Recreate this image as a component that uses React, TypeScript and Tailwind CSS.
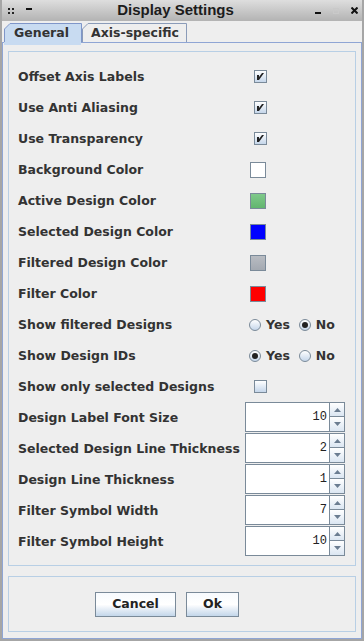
import React from "react";

const SANS = { fontFamily: '"DejaVu Sans", "Liberation Sans", sans-serif' };
const TITLE = { fontFamily: '"Liberation Sans", "DejaVu Sans", sans-serif' };
const MONO = { fontFamily: '"Liberation Mono", "DejaVu Sans Mono", monospace' };

type Row =
  | { label: string; kind: "check"; checked: boolean }
  | { label: string; kind: "color"; color: string }
  | { label: string; kind: "radio"; yes: boolean }
  | { label: string; kind: "spin"; value: string };

const rows: Row[] = [
  { label: "Offset Axis Labels", kind: "check", checked: true },
  { label: "Use Anti Aliasing", kind: "check", checked: true },
  { label: "Use Transparency", kind: "check", checked: true },
  { label: "Background Color", kind: "color", color: "#ffffff" },
  { label: "Active Design Color", kind: "color", color: "green" },
  { label: "Selected Design Color", kind: "color", color: "#0000ff" },
  { label: "Filtered Design Color", kind: "color", color: "gray" },
  { label: "Filter Color", kind: "color", color: "#ff0000" },
  { label: "Show filtered Designs", kind: "radio", yes: false },
  { label: "Show Design IDs", kind: "radio", yes: true },
  { label: "Show only selected Designs", kind: "check", checked: false },
  { label: "Design Label Font Size", kind: "spin", value: "10" },
  { label: "Selected Design Line Thickness", kind: "spin", value: "2" },
  { label: "Design Line Thickness", kind: "spin", value: "1" },
  { label: "Filter Symbol Width", kind: "spin", value: "7" },
  { label: "Filter Symbol Height", kind: "spin", value: "10" },
];

function CheckBox({ checked }: { checked: boolean }) {
  return (
    <div className="ml-[9px] w-[13px] h-[13px] border border-[#7a8a99] bg-gradient-to-b from-[#ffffff] to-[#c5d6ea] flex items-center justify-center">
      {checked && (
        <svg width="11" height="11" viewBox="0 0 11 11">
          <path d="M2 4 h2 v2 l3-4 h2 l-5 7 h-2z" fill="#222" />
        </svg>
      )}
    </div>
  );
}

function Swatch({ color }: { color: string }) {
  let cls = "";
  if (color === "green") cls = "bg-gradient-to-b from-[#7fc98a] to-[#62b66f]";
  else if (color === "gray") cls = "bg-gradient-to-b from-[#b8bcc2] to-[#a3a9b1]";
  else if (color === "#ffffff") cls = "bg-white";
  else if (color === "#0000ff") cls = "bg-[#0000ff]";
  else cls = "bg-[#ff0000]";
  return <div className={`ml-[5px] w-[16px] h-[16px] border border-[#7a8a99] ${cls}`} />;
}

function Radio({ on }: { on: boolean }) {
  return (
    <div className="w-[12px] h-[12px] rounded-full border border-[#7a8a99] bg-gradient-to-b from-[#ffffff] to-[#c5d6ea] flex items-center justify-center">
      {on && <div className="w-[6px] h-[6px] rounded-full bg-[#222]" />}
    </div>
  );
}

function RadioPair({ yes }: { yes: boolean }) {
  return (
    <div className="ml-[4px] flex items-center text-[12.5px] font-bold text-[#333]" style={SANS}>
      <Radio on={yes} />
      <span className="ml-[5px] pt-[1px]">Yes</span>
      <div className="ml-[9px]">
        <Radio on={!yes} />
      </div>
      <span className="ml-[5px] pt-[1px]">No</span>
    </div>
  );
}

function Arrow({ up }: { up: boolean }) {
  return (
    <svg width="7" height="4" viewBox="0 0 7 4">
      {up ? <path d="M0 4 L3.5 0 L7 4z" fill="#6b7d91" /> : <path d="M0 0 L3.5 4 L7 0z" fill="#6b7d91" />}
    </svg>
  );
}

function Spinner({ value }: { value: string }) {
  return (
    <div className="self-start flex h-[30px]">
      <div
        className="w-[84px] h-full border-l border-t border-b border-[#7a8a99] bg-white flex items-center justify-end pr-[2px] text-[12px] text-[#222]"
        style={MONO}
      >
        {value}
      </div>
      <div className="w-[16px] h-full flex flex-col">
        <div className="h-[15px] border border-[#7a8a99] bg-gradient-to-b from-[#ffffff] to-[#dbe6f2] flex items-center justify-center">
          <Arrow up />
        </div>
        <div className="h-[15px] border border-t-0 border-[#7a8a99] bg-gradient-to-b from-[#ffffff] to-[#dbe6f2] flex items-center justify-center">
          <Arrow up={false} />
        </div>
      </div>
    </div>
  );
}

function Tab({ label, selected, width }: { label: string; selected: boolean; width: number }) {
  const fill = selected ? "#c8dbf1" : "#eeeeee";
  const stroke = selected ? "#7f96c9" : "#8a9bb8";
  return (
    <div
      className={`relative h-full flex items-center ${selected ? "pl-[10px]" : "pl-[9px]"}`}
      style={{ width }}
    >
      <svg className="absolute inset-0" width={width} height="19" viewBox={`0 0 ${width} 19`}>
        <path
          d={`M0.5 19 L0.5 6 L6 0.5 L${width - 0.5} 0.5 L${width - 0.5} 19`}
          fill={fill}
          stroke={stroke}
        />
      </svg>
      <span className="relative pt-[1px] text-[12.5px] font-bold text-[#333] whitespace-nowrap" style={SANS}>
        {label}
      </span>
    </div>
  );
}

export default function App() {
  return (
    <div className="w-[364px] h-[641px] bg-[#eeeeee] flex flex-col border-l-2 border-r-2 border-b-2 border-[#a6a6a6] overflow-hidden">
      {/* title bar */}
      <div className="h-[21px] shrink-0 bg-gradient-to-b from-[#dedede] to-[#b3b3b3] flex items-center relative">
        <div className="ml-[6px] grid grid-cols-2 gap-[2px] w-[6px]">
          <div className="w-[2px] h-[2px] bg-[#222]" />
          <div className="w-[2px] h-[2px] bg-[#222]" />
          <div className="w-[2px] h-[2px] bg-[#222]" />
          <div className="w-[2px] h-[2px] bg-[#222]" />
        </div>
        <div className="ml-[12px] -mt-[4px] w-[6px] h-[2px] bg-[#111]" />
        <div className="flex-1 text-center text-[15px] font-bold text-[#1c1c1c] pl-[4px]" style={TITLE}>
          Display Settings
        </div>
        <div className="mt-[5px] w-[6px] h-[2px] bg-[#111]" />
        <div className="ml-[12px] w-[6px] h-[6px] border border-[#c9c9c9]" />
        <svg className="ml-[12px] mr-[4px]" width="7" height="7" viewBox="0 0 7 7">
          <path d="M0.5 0.5 L6.5 6.5 M6.5 0.5 L0.5 6.5" stroke="#111" strokeWidth="2" />
        </svg>
      </div>

      {/* tabs */}
      <div className="mt-[2px] h-[19px] shrink-0 flex pl-[2px]">
        <Tab label="General" selected width={78} />
        <Tab label="Axis-specific" selected={false} width={105} />
      </div>

      {/* tab pane */}
      <div className="flex-1 border border-[#8fa5d4] flex flex-col pl-[5px] pr-[5px] pt-[3px] pb-[6px] relative">
        <div className="absolute left-[1px] top-[-1px] w-[77px] h-[3px] bg-[#c8dbf1]" />
        <div className="mt-[5px] border border-[#b8cfe5] pl-[9px] pt-[9px] pb-[8px]">
          {rows.map((r) => (
            <div key={r.label} className="h-[31px] flex items-center">
              <div className="w-[227px] pt-[2px] text-[12.5px] font-bold text-[#333] whitespace-nowrap" style={SANS}>
                {r.label}
              </div>
              {r.kind === "check" && <CheckBox checked={r.checked} />}
              {r.kind === "color" && <Swatch color={r.color} />}
              {r.kind === "radio" && <RadioPair yes={r.yes} />}
              {r.kind === "spin" && <Spinner value={r.value} />}
            </div>
          ))}
        </div>
        <div className="mt-[10px] flex-1 border border-[#b8cfe5] flex items-center pl-[86px] gap-[10px]">
          <button
            className="w-[81px] h-[25px] border border-[#7a8a99] bg-gradient-to-b from-[#f7fafd] via-[#ffffff] to-[#c3d6ea] text-[12.5px] font-bold text-[#222]"
            style={SANS}
          >
            Cancel
          </button>
          <button
            className="w-[53px] h-[25px] border border-[#7a8a99] bg-gradient-to-b from-[#f7fafd] via-[#ffffff] to-[#c3d6ea] text-[12.5px] font-bold text-[#222]"
            style={SANS}
          >
            Ok
          </button>
        </div>
      </div>
    </div>
  );
}
